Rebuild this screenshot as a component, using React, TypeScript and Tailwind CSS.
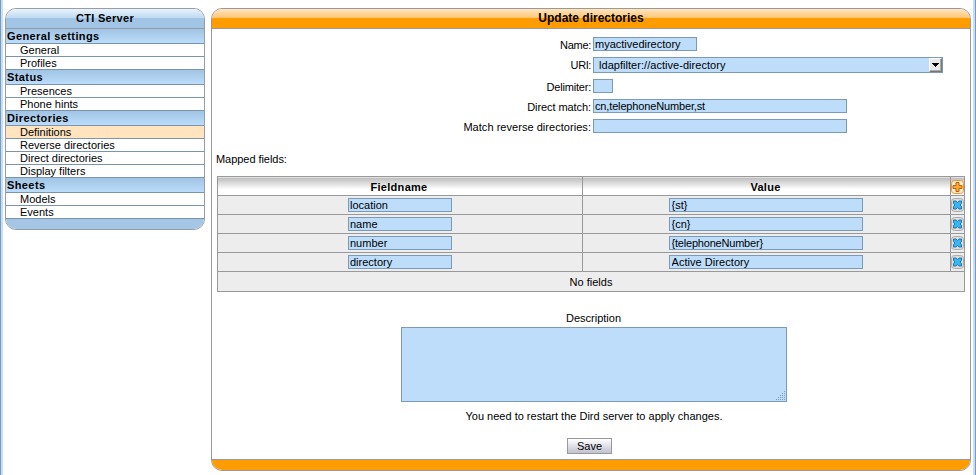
import React from "react";

type Section = { title: string; items: string[] };

const sections: Section[] = [
  { title: "General settings", items: ["General", "Profiles"] },
  { title: "Status", items: ["Presences", "Phone hints"] },
  {
    title: "Directories",
    items: ["Definitions", "Reverse directories", "Direct directories", "Display filters"],
  },
  { title: "Sheets", items: ["Models", "Events"] },
];

const mappings = [
  ["location", "{st}", ""],
  ["name", "{cn}", ""],
  ["number", "{telephoneNumber}", "tracking-[-0.2px]"],
  ["directory", "Active Directory", "tracking-[0.05px]"],
];

const field = "block h-[14px] shrink-0 border border-[#7b9ab5] bg-[#bdddfb] leading-[12px] text-black outline-none";

function Sidebar() {
  return (
    <nav className="w-[200px] overflow-hidden rounded-[11px] border border-[#999da3]">
      <h2 className="h-[20px] border-b border-[#929ba4] bg-linear-to-b from-[#eaf4fd] from-0% via-[#bad7f1] via-50% to-[#a3c5e5] to-50% text-center font-bold leading-[19px] tracking-[0.3px]">
        CTI Server
      </h2>
      {sections.map((s) => (
        <section key={s.title}>
          <h3 className="h-[15px] border-b border-[#7895ad] bg-linear-to-b from-[#a2c4e4] to-[#bbdcfa] pl-[1px] font-bold leading-[14px] tracking-[0.4px]">
            {s.title}
          </h3>
          <ul>
            {s.items.map((item) => (
              <li
                key={item}
                className={"h-[13px] border-b border-[#7895ad] pl-[14px] leading-[13px] " + (item === "Definitions" ? "bg-[#ffe4bf]" : "bg-white")}
              >
                {item}
              </li>
            ))}
          </ul>
        </section>
      ))}
      <div className="h-[10px] bg-[#a5c6e6]" />
    </nav>
  );
}

function Row({ label, className, labelClass = "", children }: { label: string; className: string; labelClass?: string; children: React.ReactNode }) {
  return (
    <div className={"flex " + className}>
      <label className={"w-[379px] pt-[1px] text-right leading-[14px] " + labelClass}>{label}</label>
      <div className="ml-[2px]">{children}</div>
    </div>
  );
}

function AddIcon() {
  return (
    <svg className="mt-px block" width="13" height="14" viewBox="0 0 13 14">
      <rect x=".5" y=".5" width="12" height="13" rx="3" fill="#f3ead9" stroke="#f5961e" />
      <path d="M5 2.500h3V5.500h3v3H8v3H5v-3H2v-3h3z" fill="#ffa834" stroke="#b9640f" />
    </svg>
  );
}

function DeleteIcon() {
  return (
    <svg className="block" width="13" height="14" viewBox="0 0 13 14">
      <rect x=".5" y=".5" width="12" height="13" rx="3" fill="#dcdcdc" stroke="#adadad" />
      <path d="M2.500 3h2.500l1.500 1.500L8 3h2.500v2.500L9 7l1.500 1.500V11H8L6.500 9.500 5 11H2.500V8.500L4 7 2.500 5.500z" fill="#39b5f2" stroke="#1f77ab" />
    </svg>
  );
}

function MappingTable() {
  const cell = "border border-[#999] p-0";
  const head = "h-[19px] bg-linear-to-b from-[#c0c0c0] from-5% to-white to-65% font-bold";
  const title = "block h-[18px] pt-[1px] leading-[18px] tracking-[0.3px]";
  return (
    <table className="w-[748px] table-fixed border-collapse bg-[#ededed] text-center">
      <colgroup>
        <col className="w-[365px]" />
        <col className="w-[368px]" />
        <col className="w-[14px]" />
      </colgroup>
      <thead>
        <tr>
          <th className={cell + " " + head}><span className={title + " pr-[2px]"}>Fieldname</span></th>
          <th className={cell + " " + head}><span className={title + " pr-[2px]"}>Value</span></th>
          <th className={cell + " " + head}><AddIcon /></th>
        </tr>
      </thead>
      <tbody>
        {mappings.map(([name, value, spacing]) => (
          <tr key={name}>
            <td className={cell + " h-[19px]"}>
              <input className={field + " mx-auto w-[104px] px-[1px]"} defaultValue={name} />
            </td>
            <td className={cell + " h-[19px] pr-[2px]"}>
              <input className={field + " mx-auto w-[194px] px-[2px] " + spacing} defaultValue={value} />
            </td>
            <td className={cell + " h-[19px] pt-[2px] align-top"}><DeleteIcon /></td>
          </tr>
        ))}
        <tr>
          <td colSpan={3} className={cell + " h-[20px]"}><span className="block h-[19px] pt-[1px] leading-[19px]">No fields</span></td>
        </tr>
      </tbody>
    </table>
  );
}

function ResizeGrip() {
  return (
    <svg className="absolute right-[1px] bottom-[1px]" width="10" height="10" viewBox="0 0 10 10" fill="#7e9ab5" shapeRendering="crispEdges">
      <path d="M8 0h1v1H8zM6 2h1v1H6zM8 2h1v1H8zM4 4h1v1H4zM6 4h1v1H6zM8 4h1v1H8zM2 6h1v1H2zM4 6h1v1H4zM6 6h1v1H6zM8 6h1v1H8zM0 8h1v1H0zM2 8h1v1H2zM4 8h1v1H4zM6 8h1v1H6zM8 8h1v1H8z" />
    </svg>
  );
}

export default function App() {
  return (
    <div className="flex h-[475px] w-[976px] overflow-hidden border-x border-[#7b9ab8] bg-white font-['Liberation_Sans',Arial,sans-serif] text-[11px] text-black">
      <div className="flex w-full items-start border-l-2 border-r-2 border-[#c3dfff] pt-[8px] pl-[2px]">
        <Sidebar />
        <main className="ml-[6px] h-[463px] w-[760px] shrink-0 overflow-hidden rounded-[11px] border border-[#999]">
          <h1 className="h-[20px] border-b border-[#999] bg-linear-to-b from-[#ffe5c0] from-0% via-[#ffc36a] via-50% to-[#ff9c00] to-50% text-center text-[12px] font-bold leading-[18px]">
            Update directories
          </h1>
          <div className="flex h-[430px] flex-col">
            <Row label="Name:" className="mt-[8px] h-[14px]" labelClass="tracking-[-0.3px]">
              <input className={field + " w-[104px] px-[1px]"} defaultValue="myactivedirectory" />
            </Row>
            <Row label="URI:" className="mt-[6px] h-[16px]" labelClass="tracking-[-0.4px]">
              <div className="flex h-[16px] w-[350px] items-center border border-[#7b9ab5] bg-[#bdddfb] pl-[5px]">
                <span className="flex-1 leading-[14px] tracking-[0.04px]">ldapfilter://active-directory</span>
                <span className="flex h-[14px] w-[13px] items-center justify-center border border-t-white border-l-white border-r-[#777] border-b-[#777] bg-[#e9e9e9] shadow-[inset_-1px_-1px_#aaa]">
                  <svg width="7" height="4" viewBox="0 0 7 4" shapeRendering="crispEdges"><path d="M0 0h7v1H6v1H5v1H4v1H3V3H2V2H1V1H0z" /></svg>
                </span>
              </div>
            </Row>
            <Row label="Delimiter:" className="mt-[6px] h-[14px]" labelClass="tracking-[-0.2px]">
              <input className={field + " w-[20px] px-[1px]"} />
            </Row>
            <Row label="Direct match:" className="mt-[6px] h-[14px]" labelClass="tracking-[-0.08px]">
              <input className={field + " w-[254px] px-[1px] tracking-[-0.15px]"} defaultValue="cn,telephoneNumber,st" />
            </Row>
            <Row label="Match reverse directories:" className="mt-[6px] h-[14px]" labelClass="tracking-[0.04px]">
              <input className={field + " w-[254px] px-[1px]"} />
            </Row>
            <p className="mt-[19px] pl-[4px] leading-[14px] tracking-[-0.05px]">Mapped fields:</p>
            <div className="mt-[10px] pl-[5px]"><MappingTable /></div>
            <label className="mt-[19px] h-[16px] pl-[5px] text-center leading-[15px]">Description</label>
            <div className="relative ml-[189px] h-[75px] w-[386px]">
              <textarea className="block size-full resize-none border border-[#7b9ab5] bg-[#bdddfb] outline-none" />
              <ResizeGrip />
            </div>
            <p className="mt-[7px] pl-[6px] text-center leading-[14px]">You need to restart the Dird server to apply changes.</p>
            <button className="mt-[15px] ml-[355px] h-[16px] w-[45px] border border-[#999] bg-linear-to-b from-white to-[#c1c1d1] leading-[14px]">Save</button>
          </div>
          <div className="h-[11px] border-t border-[#999] bg-[#ff9c00]" />
        </main>
      </div>
    </div>
  );
}
